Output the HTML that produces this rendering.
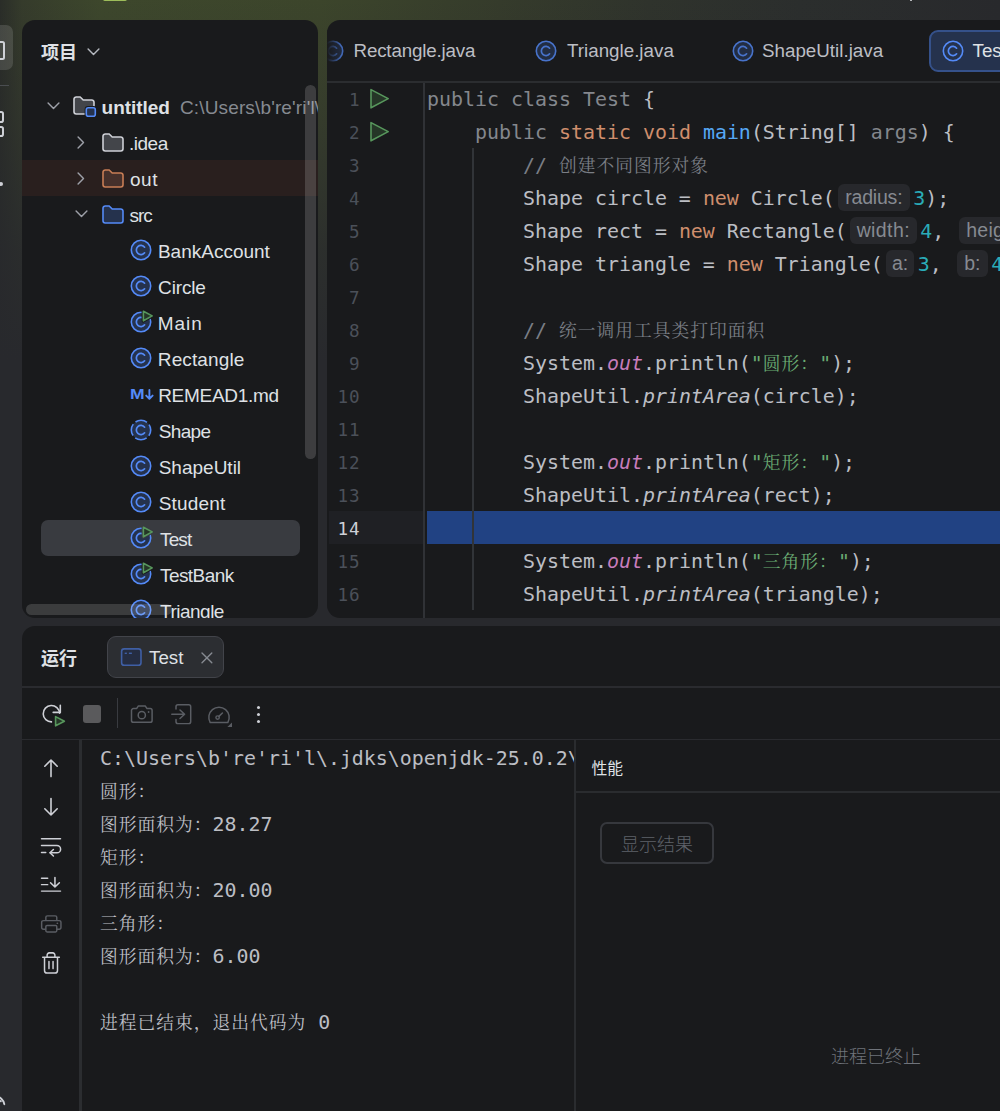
<!DOCTYPE html>
<html lang="zh-CN">
<head>
<meta charset="utf-8">
<title>untitled – Test.java</title>
<style>
*{box-sizing:border-box;margin:0;padding:0}
html,body{width:1000px;height:1111px;overflow:hidden;background:#28292d}
body{position:relative;font-family:"Liberation Sans","Noto Sans CJK SC",sans-serif;color:#dfe1e5}
.abs{position:absolute}
#bg{left:0;top:0;width:1000px;height:1111px;background:
 linear-gradient(180deg, rgba(40,41,45,0) 0px, rgba(40,41,45,.35) 120px, rgba(40,41,45,.8) 250px, rgba(40,41,45,1) 360px),
 linear-gradient(90deg, #2a2d28 0px, #353b2b 22px, #3d472c 100px, #3c452b 320px, #353b2b 500px, #2f332c 650px, #2b2e2d 800px, #28292c 1000px)}
#strip{left:0;top:0;width:22px;height:1111px;overflow:hidden}
.panel{position:absolute;background:#191a1c;overflow:hidden}
#proj{left:22px;top:20px;width:296px;height:598px;border-radius:13px}
#edit{left:327px;top:20px;width:700px;height:598px;border-radius:13px}
#run{left:22px;top:626px;width:1000px;height:500px;border-radius:13px}
.row{position:absolute;left:0;width:296px;height:36px;font-size:19px;line-height:36px;white-space:nowrap;color:#dfe1e5}
.row .t{position:absolute;top:2px}
.cl{position:absolute;left:100px;height:33px;line-height:33px;font-size:19.93px;white-space:pre;color:#bcbec4;font-family:"DejaVu Sans Mono","Liberation Mono","Noto Serif CJK SC",monospace}
.ln{position:absolute;left:0;width:33.2px;text-align:right;height:33px;line-height:33px;font-size:17.6px;letter-spacing:.7px;color:#4b5059;font-family:"DejaVu Sans Mono","Liberation Mono",monospace}
.g{color:#84878d}.k{color:#cf8e6d}.f{color:#56a8f5}.c{color:#7a7e85}.n{color:#2aacb8}.s{color:#6aab73}.p{color:#c77dbb;font-style:italic}.i{font-style:italic}
.cj{font-family:"Noto Serif CJK SC",serif;font-size:17.75px;letter-spacing:1px;line-height:1px}
.hint{display:inline-block;vertical-align:top;margin:2px 3.5px 0 3px;height:27px;line-height:27px;text-align:center;border-radius:6px;background:#27282c;color:#868a91;font-family:"Liberation Sans",sans-serif;font-size:19.5px;letter-spacing:-0.2px;font-style:normal;overflow:hidden}
.tabt{font-size:18.8px;line-height:36px;white-space:nowrap}
.con{color:#bcbec4}

</style>
</head>
<body>
<div id="bg" class="abs"></div>
<div class="abs" style="left:103px;top:-3px;width:24px;height:4.4px;border-radius:2px;background:#9dbd5a"></div>
<div class="abs" style="left:909.6px;top:-1.2px;width:2.2px;height:2.4px;border-radius:1px;background:#e6e7ea"></div>
<div id="strip" class="abs">
<div class="abs" style="left:-20px;top:25px;width:33px;height:45px;border-radius:7px;background:rgba(255,255,255,.13)"></div>
<div class="abs" style="left:-16px;top:41px;width:21px;height:18.5px;border:2px solid #ced0d6;border-radius:2.5px"></div>
<div class="abs" style="left:0;top:85px;width:9px;height:1.3px;background:#4a4d50"></div>
<div class="abs" style="left:-8px;top:111px;width:11.8px;height:11.5px;border:2px solid #ced0d6;border-radius:2.8px"></div>
<div class="abs" style="left:-8px;top:125.5px;width:11.8px;height:11.5px;border:2px solid #ced0d6;border-radius:2.8px"></div>
<div class="abs" style="left:-1px;top:182px;width:3.6px;height:3.6px;border-radius:2px;background:#ced0d6"></div>
<svg class="abs" style="left:0;top:1090px" width="10" height="21" viewBox="0 0 10 21"><path d="M-4.5 6.3A9.4 9.4 0 0 1 4.3 14.2" fill="none" stroke="#ced0d6" stroke-width="1.9" stroke-linecap="round"/><path d="M-2 10.6A3 3 0 0 1 0.9 11.4" fill="none" stroke="#ced0d6" stroke-width="1.6" stroke-linecap="round"/></svg>
</div>
<div id="proj" class="panel">
<div class="abs" style="left:19px;top:18.5px;font-size:18px;line-height:28px;font-weight:bold;color:#dfe1e5;white-space:nowrap">项目</div>
<svg class="abs" style="left:64.5px;top:27.8px" width="13" height="8" viewBox="0 0 13 8"><path d="M1.1 1.1L6.5 6.5L11.9 1.1" fill="none" stroke="#b4b8bf" stroke-width="1.45" stroke-linecap="round" stroke-linejoin="round"/></svg>
<div class="abs" style="left:0;top:140px;width:296px;height:36px;background:#291f1e"></div>
<div class="abs" style="left:19px;top:500px;width:259px;height:36px;border-radius:7px;background:#393b40"></div>
<svg class="abs" style="left:24.6px;top:82.2px" width="13" height="8" viewBox="0 0 13 8"><path d="M1.1 1.1L6.5 6.5L11.9 1.1" fill="none" stroke="#9da0a8" stroke-width="1.45" stroke-linecap="round" stroke-linejoin="round"/></svg>
<svg class="abs" style="left:51px;top:76px" width="25" height="23" viewBox="0 0 25 23"><path d="M1 3.2A2.2 2.2 0 0 1 3.2 1H7.2L10.2 4H18.8A2.2 2.2 0 0 1 21 6.2V15.8A2.2 2.2 0 0 1 18.8 18H3.2A2.2 2.2 0 0 1 1 15.8Z" fill="#43454a" stroke="#ced0d6" stroke-width="1.6" stroke-linejoin="round"/><rect x="11.6" y="10" width="12.4" height="12" rx="3.4" fill="#191a1c"/><rect x="13.3" y="11.7" width="9" height="8.6" rx="2" fill="#25324d" stroke="#548af7" stroke-width="1.6"/></svg>
<div class="row" style="top:68px"><span class="t" id="t_untitled" style="left:79px;font-weight:bold;letter-spacing:-0.03px;margin-left:0.6px">untitled</span><span class="t" id="t_path" style="left:158px;color:#868a91;letter-spacing:0.14px">C:\Users\b're'ri'l\IdeaProjects</span></div>
<svg class="abs" style="left:54.8px;top:115.5px" width="8" height="13" viewBox="0 0 8 13"><path d="M1.1 1.1L6.5 6.5L1.1 11.9" fill="none" stroke="#9da0a8" stroke-width="1.45" stroke-linecap="round" stroke-linejoin="round"/></svg>
<svg class="abs" style="left:80px;top:112.5px" width="22" height="19" viewBox="0 0 22 19"><path d="M1 3.2A2.2 2.2 0 0 1 3.2 1H7.2L10.2 4H18.8A2.2 2.2 0 0 1 21 6.2V15.8A2.2 2.2 0 0 1 18.8 18H3.2A2.2 2.2 0 0 1 1 15.8Z" fill="#43454a" stroke="#ced0d6" stroke-width="1.6" stroke-linejoin="round"/></svg>
<div class="row" style="top:104px"><span class="t" id="t_idea" style="left:107px;letter-spacing:-0.5px;margin-left:0.0px">.idea</span></div>
<svg class="abs" style="left:54.8px;top:151.5px" width="8" height="13" viewBox="0 0 8 13"><path d="M1.1 1.1L6.5 6.5L1.1 11.9" fill="none" stroke="#9da0a8" stroke-width="1.45" stroke-linecap="round" stroke-linejoin="round"/></svg>
<svg class="abs" style="left:80px;top:148.5px" width="22" height="19" viewBox="0 0 22 19"><path d="M1 3.2A2.2 2.2 0 0 1 3.2 1H7.2L10.2 4H18.8A2.2 2.2 0 0 1 21 6.2V15.8A2.2 2.2 0 0 1 18.8 18H3.2A2.2 2.2 0 0 1 1 15.8Z" fill="#45302b" stroke="#c77d55" stroke-width="1.6" stroke-linejoin="round"/></svg>
<div class="row" style="top:140px"><span class="t" id="t_out" style="left:107px;letter-spacing:0.5px;margin-left:1.0px">out</span></div>
<svg class="abs" style="left:52.599999999999994px;top:190.2px" width="13" height="8" viewBox="0 0 13 8"><path d="M1.1 1.1L6.5 6.5L11.9 1.1" fill="none" stroke="#9da0a8" stroke-width="1.45" stroke-linecap="round" stroke-linejoin="round"/></svg>
<svg class="abs" style="left:80px;top:184.5px" width="22" height="19" viewBox="0 0 22 19"><path d="M1 3.2A2.2 2.2 0 0 1 3.2 1H7.2L10.2 4H18.8A2.2 2.2 0 0 1 21 6.2V15.8A2.2 2.2 0 0 1 18.8 18H3.2A2.2 2.2 0 0 1 1 15.8Z" fill="#25324d" stroke="#548af7" stroke-width="1.6" stroke-linejoin="round"/></svg>
<div class="row" style="top:176px"><span class="t" id="t_src" style="left:107px;letter-spacing:-1.1px;margin-left:0.6px">src</span></div>
<svg class="abs" style="left:108px;top:218px;opacity:1;overflow:visible" width="24" height="24" viewBox="0 0 24 24"><circle cx="11" cy="12" r="9.7" fill="#25324d" stroke="#548af7" stroke-width="1.6"/><path d="M14.6 9.2A4.6 4.6 0 1 0 14.6 14.8" fill="none" stroke="#548af7" stroke-width="1.7" stroke-linecap="round"/></svg>
<div class="row" style="top:212px"><span class="t" id="t_BankAccount" style="left:136px;letter-spacing:-0.0px;margin-left:-0.1px">BankAccount</span></div>
<svg class="abs" style="left:108px;top:254px;opacity:1;overflow:visible" width="24" height="24" viewBox="0 0 24 24"><circle cx="11" cy="12" r="9.7" fill="#25324d" stroke="#548af7" stroke-width="1.6"/><path d="M14.6 9.2A4.6 4.6 0 1 0 14.6 14.8" fill="none" stroke="#548af7" stroke-width="1.7" stroke-linecap="round"/></svg>
<div class="row" style="top:248px"><span class="t" id="t_Circle" style="left:136px;letter-spacing:-0.16px;margin-left:0.1px">Circle</span></div>
<svg class="abs" style="left:108px;top:290px;opacity:1;overflow:visible" width="24" height="24" viewBox="0 0 24 24"><circle cx="11" cy="12" r="9.7" fill="#25324d" stroke="#548af7" stroke-width="1.6"/><path d="M14.6 9.2A4.6 4.6 0 1 0 14.6 14.8" fill="none" stroke="#548af7" stroke-width="1.7" stroke-linecap="round"/><path d="M13.4 1.2L22.2 5.9L13.4 10.8Z" fill="#253627" stroke="#191a1c" stroke-width="3.6" stroke-linejoin="round"/><path d="M13.4 1.2L22.2 5.9L13.4 10.8Z" fill="#253627" stroke="#57965c" stroke-width="1.6" stroke-linejoin="round"/></svg>
<div class="row" style="top:284px"><span class="t" id="t_Main" style="left:136px;letter-spacing:0.94px;margin-left:-0.2px">Main</span></div>
<svg class="abs" style="left:108px;top:326px;opacity:1;overflow:visible" width="24" height="24" viewBox="0 0 24 24"><circle cx="11" cy="12" r="9.7" fill="#25324d" stroke="#548af7" stroke-width="1.6"/><path d="M14.6 9.2A4.6 4.6 0 1 0 14.6 14.8" fill="none" stroke="#548af7" stroke-width="1.7" stroke-linecap="round"/></svg>
<div class="row" style="top:320px"><span class="t" id="t_Rectangle" style="left:136px;letter-spacing:0.12px;margin-left:-0.2px">Rectangle</span></div>
<div class="abs" style="left:107.6px;top:363px;font-size:14.6px;line-height:22px;font-weight:bold;color:#548af7;white-space:nowrap;transform:scaleX(1.2);transform-origin:0 0">M</div><svg class="abs" style="left:122.6px;top:368.8px" width="9" height="12" viewBox="0 0 9 12"><path d="M4.4 1V9.6M1.2 6.6L4.4 9.8L7.6 6.6" fill="none" stroke="#548af7" stroke-width="1.9" stroke-linecap="round" stroke-linejoin="round"/></svg>
<div class="row" style="top:356px"><span class="t" id="t_REMEAD1" style="left:136px;letter-spacing:-0.29px;margin-left:0.2px">REMEAD1.md</span></div>
<svg class="abs" style="left:108px;top:398px;opacity:1;overflow:visible" width="24" height="24" viewBox="0 0 24 24"><circle cx="11" cy="12" r="9.7" fill="#25324d" stroke="#548af7" stroke-width="1.6" stroke-dasharray="12.2 3.04" stroke-dashoffset="6.1"/><path d="M14.6 9.2A4.6 4.6 0 1 0 14.6 14.8" fill="none" stroke="#548af7" stroke-width="1.7" stroke-linecap="round"/></svg>
<div class="row" style="top:392px"><span class="t" id="t_Shape" style="left:136px;letter-spacing:-0.65px;margin-left:0.7px">Shape</span></div>
<svg class="abs" style="left:108px;top:434px;opacity:1;overflow:visible" width="24" height="24" viewBox="0 0 24 24"><circle cx="11" cy="12" r="9.7" fill="#25324d" stroke="#548af7" stroke-width="1.6"/><path d="M14.6 9.2A4.6 4.6 0 1 0 14.6 14.8" fill="none" stroke="#548af7" stroke-width="1.7" stroke-linecap="round"/></svg>
<div class="row" style="top:428px"><span class="t" id="t_ShapeUtil" style="left:136px;letter-spacing:0.0px;margin-left:0.7px">ShapeUtil</span></div>
<svg class="abs" style="left:108px;top:470px;opacity:1;overflow:visible" width="24" height="24" viewBox="0 0 24 24"><circle cx="11" cy="12" r="9.7" fill="#25324d" stroke="#548af7" stroke-width="1.6"/><path d="M14.6 9.2A4.6 4.6 0 1 0 14.6 14.8" fill="none" stroke="#548af7" stroke-width="1.7" stroke-linecap="round"/></svg>
<div class="row" style="top:464px"><span class="t" id="t_Student" style="left:136px;letter-spacing:0.2px;margin-left:0.7px">Student</span></div>
<svg class="abs" style="left:108px;top:506px;opacity:1;overflow:visible" width="24" height="24" viewBox="0 0 24 24"><circle cx="11" cy="12" r="9.7" fill="#25324d" stroke="#548af7" stroke-width="1.6"/><path d="M14.6 9.2A4.6 4.6 0 1 0 14.6 14.8" fill="none" stroke="#548af7" stroke-width="1.7" stroke-linecap="round"/><path d="M13.4 1.2L22.2 5.9L13.4 10.8Z" fill="#253627" stroke="#393b40" stroke-width="3.6" stroke-linejoin="round"/><path d="M13.4 1.2L22.2 5.9L13.4 10.8Z" fill="#253627" stroke="#57965c" stroke-width="1.6" stroke-linejoin="round"/></svg>
<div class="row" style="top:500px"><span class="t" id="t_Test" style="left:136px;letter-spacing:-0.87px;margin-left:2.0px">Test</span></div>
<svg class="abs" style="left:108px;top:542px;opacity:1;overflow:visible" width="24" height="24" viewBox="0 0 24 24"><circle cx="11" cy="12" r="9.7" fill="#25324d" stroke="#548af7" stroke-width="1.6"/><path d="M14.6 9.2A4.6 4.6 0 1 0 14.6 14.8" fill="none" stroke="#548af7" stroke-width="1.7" stroke-linecap="round"/><path d="M13.4 1.2L22.2 5.9L13.4 10.8Z" fill="#253627" stroke="#191a1c" stroke-width="3.6" stroke-linejoin="round"/><path d="M13.4 1.2L22.2 5.9L13.4 10.8Z" fill="#253627" stroke="#57965c" stroke-width="1.6" stroke-linejoin="round"/></svg>
<div class="row" style="top:536px"><span class="t" id="t_TestBank" style="left:136px;letter-spacing:-0.57px;margin-left:2.0px">TestBank</span></div>
<svg class="abs" style="left:108px;top:578px;opacity:1;overflow:visible" width="24" height="24" viewBox="0 0 24 24"><circle cx="11" cy="12" r="9.7" fill="#25324d" stroke="#548af7" stroke-width="1.6"/><path d="M14.6 9.2A4.6 4.6 0 1 0 14.6 14.8" fill="none" stroke="#548af7" stroke-width="1.7" stroke-linecap="round"/></svg>
<div class="row" style="top:572px"><span class="t" id="t_Triangle" style="left:136px;letter-spacing:-0.5px;margin-left:2px">Triangle</span></div>
<div class="abs" style="left:283px;top:65px;width:10.8px;height:374px;border-radius:5.4px;background:rgba(255,255,255,.155)"></div>
<div class="abs" style="left:4px;top:584px;width:146px;height:10.5px;border-radius:5.5px;background:rgba(255,255,255,.15)"></div>
</div>
<div id="edit" class="panel">
<div class="abs" style="left:0;top:0;width:40px;height:60px;overflow:hidden"><svg class="abs" style="left:-4.699999999999989px;top:19px;opacity:0.7;overflow:visible" width="24" height="24" viewBox="0 0 24 24"><circle cx="11" cy="12" r="9.7" fill="#25324d" stroke="#548af7" stroke-width="1.6"/><path d="M14.6 9.2A4.6 4.6 0 1 0 14.6 14.8" fill="none" stroke="#548af7" stroke-width="1.7" stroke-linecap="round"/></svg><div class="abs" style="left:0;top:10px;width:14px;height:44px;background:linear-gradient(90deg,#191a1c 0%,rgba(25,26,28,0) 100%)"></div></div>
<div class="abs tabt" id="tab1" style="left:26.5px;top:13px;color:#bcbec4;letter-spacing:-0.18px">Rectangle.java</div>
<svg class="abs" style="left:208px;top:19px;opacity:0.8;overflow:visible" width="24" height="24" viewBox="0 0 24 24"><circle cx="11" cy="12" r="9.7" fill="#25324d" stroke="#548af7" stroke-width="1.6"/><path d="M14.6 9.2A4.6 4.6 0 1 0 14.6 14.8" fill="none" stroke="#548af7" stroke-width="1.7" stroke-linecap="round"/></svg><div class="abs tabt" id="tab2" style="left:240px;top:13px;color:#bcbec4">Triangle.java</div>
<svg class="abs" style="left:405px;top:19px;opacity:0.8;overflow:visible" width="24" height="24" viewBox="0 0 24 24"><circle cx="11" cy="12" r="9.7" fill="#25324d" stroke="#548af7" stroke-width="1.6"/><path d="M14.6 9.2A4.6 4.6 0 1 0 14.6 14.8" fill="none" stroke="#548af7" stroke-width="1.7" stroke-linecap="round"/></svg><div class="abs tabt" id="tab3" style="left:435px;top:13px;color:#bcbec4">ShapeUtil.java</div>
<div class="abs" style="left:601.5px;top:9.5px;width:120px;height:42px;border-radius:9px;background:#25324d;border:2px solid #35518a"></div>
<svg class="abs" style="left:614.7px;top:19px;opacity:1;overflow:visible" width="24" height="24" viewBox="0 0 24 24"><circle cx="11" cy="12" r="9.7" fill="#25324d" stroke="#548af7" stroke-width="1.6"/><path d="M14.6 9.2A4.6 4.6 0 1 0 14.6 14.8" fill="none" stroke="#548af7" stroke-width="1.7" stroke-linecap="round"/></svg>
<div class="abs tabt" id="tab4" style="left:645.5px;top:13px;color:#dfe1e5">Test.java</div>
<div class="abs" style="left:0;top:61px;width:700px;height:2px;background:#2b2d30"></div>
<div class="abs" style="left:1.5px;top:491px;width:95px;height:33px;background:#1f2024"></div>
<div class="abs" style="left:100px;top:491px;width:600px;height:33px;background:#214283"></div>
<div class="abs" style="left:96.2px;top:63px;width:2px;height:540px;background:#303236"></div>
<div class="abs" style="left:145.3px;top:128px;width:1.3px;height:462px;background:#313438"></div>
<div class="ln" style="top:64px;color:#4b5059">1</div>
<div class="ln" style="top:97px;color:#4b5059">2</div>
<div class="ln" style="top:130px;color:#4b5059">3</div>
<div class="ln" style="top:163px;color:#4b5059">4</div>
<div class="ln" style="top:196px;color:#4b5059">5</div>
<div class="ln" style="top:229px;color:#4b5059">6</div>
<div class="ln" style="top:262px;color:#4b5059">7</div>
<div class="ln" style="top:295px;color:#4b5059">8</div>
<div class="ln" style="top:328px;color:#4b5059">9</div>
<div class="ln" style="top:361px;color:#4b5059">10</div>
<div class="ln" style="top:394px;color:#4b5059">11</div>
<div class="ln" style="top:427px;color:#4b5059">12</div>
<div class="ln" style="top:460px;color:#4b5059">13</div>
<div class="ln" style="top:493px;color:#ced0d6">14</div>
<div class="ln" style="top:526px;color:#4b5059">15</div>
<div class="ln" style="top:559px;color:#4b5059">16</div>
<svg class="abs" style="left:42px;top:67px" width="22" height="24" viewBox="0 0 22 24"><path d="M2 2.6L19.2 11.6L2 20.8Z" fill="#253627" stroke="#57965c" stroke-width="1.6" stroke-linejoin="round"/></svg>
<svg class="abs" style="left:42px;top:100px" width="22" height="24" viewBox="0 0 22 24"><path d="M2 2.6L19.2 11.6L2 20.8Z" fill="#253627" stroke="#57965c" stroke-width="1.6" stroke-linejoin="round"/></svg>
<div class="cl" id="L1" style="top:63px"><span class="g">public class Test</span> {</div>
<div class="cl" id="L2" style="top:96px">    <span class="g">public</span> <span class="k">static void</span> <span class="f">main</span>(String[] <span class="g">args</span>) {</div>
<div class="cl" id="L3" style="top:129px">        <span class="c">// <span class="cj">创建不同图形对象</span></span></div>
<div class="cl" id="L4" style="top:162px">        Shape circle = <span class="k">new</span> Circle(<span class="hint" style="width:72px;letter-spacing:-0.2px">radius:</span><span class="n">3</span>);</div>
<div class="cl" id="L5" style="top:195px">        Shape rect = <span class="k">new</span> Rectangle(<span class="hint" style="width:67px;letter-spacing:0.4px">width:</span><span class="n">4</span>, <span class="hint" style="width:74px;letter-spacing:0.2px">height:</span><span class="n">5</span>);</div>
<div class="cl" id="L6" style="top:228px">        Shape triangle = <span class="k">new</span> Triangle(<span class="hint" style="width:28.5px;letter-spacing:-0.2px">a:</span><span class="n">3</span>, <span class="hint" style="width:31px;letter-spacing:-0.2px">b:</span><span class="n">4</span>, <span class="hint" style="width:29px;letter-spacing:-0.2px">c:</span><span class="n">5</span>);</div>
<div class="cl" id="L8" style="top:294px">        <span class="c">// <span class="cj">统一调用工具类打印面积</span></span></div>
<div class="cl" id="L9" style="top:327px">        System.<span class="p">out</span>.println(<span class="s">"<span class="cj">圆形：</span>"</span>);</div>
<div class="cl" id="L10" style="top:360px">        ShapeUtil.<span class="i">printArea</span>(circle);</div>
<div class="cl" id="L12" style="top:426px">        System.<span class="p">out</span>.println(<span class="s">"<span class="cj">矩形：</span>"</span>);</div>
<div class="cl" id="L13" style="top:459px">        ShapeUtil.<span class="i">printArea</span>(rect);</div>
<div class="cl" id="L15" style="top:525px">        System.<span class="p">out</span>.println(<span class="s">"<span class="cj">三角形：</span>"</span>);</div>
<div class="cl" id="L16" style="top:558px">        ShapeUtil.<span class="i">printArea</span>(triangle);</div>
</div>
<div id="run" class="panel">
<div class="abs" style="left:19px;top:19px;font-size:18px;line-height:28px;font-weight:bold;white-space:nowrap;color:#dfe1e5">运行</div>
<div class="abs" style="left:84.5px;top:9.5px;width:117px;height:42px;border-radius:9px;background:#2c2e32;border:1.6px solid #42444a"></div>
<svg class="abs" style="left:98px;top:21px" width="23" height="20" viewBox="0 0 23 20"><rect x="1.6" y="1.9" width="19.4" height="16.4" rx="2.6" fill="#252d42" stroke="#3f5fa5" stroke-width="1.6"/><rect x="4.7" y="5.6" width="2.2" height="1.4" fill="#3f5fa5"/><rect x="8.9" y="5.6" width="3" height="1.4" fill="#3f5fa5"/></svg>
<div class="abs tabt" id="runtab" style="left:127px;top:13.5px;color:#dfe1e5">Test</div>
<svg class="abs" style="left:179.2px;top:26px" width="12" height="12" viewBox="0 0 12 12"><path d="M1 1L10.8 10.8M10.8 1L1 10.8" stroke="#868a91" stroke-width="1.4" stroke-linecap="round"/></svg>
<div class="abs" style="left:0;top:60.299999999999955px;width:1000px;height:1.4px;background:#2a2b2f"></div>
<div class="abs" style="left:0;top:112.89999999999998px;width:1000px;height:1.3px;background:#2a2b2f"></div>
<svg class="abs" style="left:20px;top:76px" width="26" height="26" viewBox="0 0 26 26"><path d="M17.6 11.2A8.2 8.2 0 1 0 9.6 19.9" fill="none" stroke="#ced0d6" stroke-width="1.6" stroke-linecap="round"/><path d="M18.3 3.2V10.4H11.2" fill="none" stroke="#ced0d6" stroke-width="1.6" stroke-linecap="round" stroke-linejoin="round"/><path d="M12.4 14.2L22.6 19.2L12.4 24.2Z" fill="#191a1c" stroke="#191a1c" stroke-width="4" stroke-linejoin="round"/><path d="M13.6 14.6L22.4 19.2L13.6 23.8Z" fill="#253627" stroke="#57965c" stroke-width="1.6" stroke-linejoin="round"/></svg>
<div class="abs" style="left:61.2px;top:79.20000000000005px;width:18px;height:18px;border-radius:3px;background:#5a5a5c"></div>
<div class="abs" style="left:94.5px;top:72px;width:1.5px;height:30px;background:#393b40"></div>
<svg class="abs" style="left:107.5px;top:77px" width="24" height="22" viewBox="0 0 24 22"><path d="M3.4 5.6H6.6L8.4 2.9H15.2L17 5.6H20.2A1.9 1.9 0 0 1 22.1 7.5V17.4A1.9 1.9 0 0 1 20.2 19.3H3.4A1.9 1.9 0 0 1 1.5 17.4V7.5A1.9 1.9 0 0 1 3.4 5.6Z" fill="none" stroke="#5a5d63" stroke-width="1.5" stroke-linejoin="round"/><circle cx="11.8" cy="12.2" r="3.6" fill="none" stroke="#5a5d63" stroke-width="1.5"/><circle cx="18.6" cy="9" r="0.9" fill="#5a5d63"/></svg>
<svg class="abs" style="left:148px;top:76.5px" width="23" height="23" viewBox="0 0 23 24" preserveAspectRatio="none"><path d="M6 6.2V3.8A1.9 1.9 0 0 1 7.9 1.9H18.8A1.9 1.9 0 0 1 20.7 3.8V19.6A1.9 1.9 0 0 1 18.8 21.5H7.9A1.9 1.9 0 0 1 6 19.6V17.2" fill="none" stroke="#5a5d63" stroke-width="1.5" stroke-linecap="round"/><path d="M1.8 11.7H14.4M10 7.2L14.6 11.7L10 16.2" fill="none" stroke="#5a5d63" stroke-width="1.5" stroke-linecap="round" stroke-linejoin="round"/></svg>
<svg class="abs" style="left:183.7px;top:78px" width="28" height="24" viewBox="0 0 28 24"><path d="M4.2 18.6A10.2 10.2 0 1 1 21.8 18.6Z" fill="none" stroke="#5a5d63" stroke-width="1.5" stroke-linejoin="round"/><circle cx="11.6" cy="13.6" r="1.7" fill="none" stroke="#5a5d63" stroke-width="1.4"/><path d="M12.9 12.4L16.4 9" stroke="#5a5d63" stroke-width="1.5" stroke-linecap="round"/><path d="M26 18.4V23H21.4Z" fill="#5a5d63"/></svg>
<div class="abs" style="left:234.5px;top:80.29999999999995px;width:3.2px;height:3.2px;border-radius:2px;background:#ced0d6"></div>
<div class="abs" style="left:234.5px;top:87.0px;width:3.2px;height:3.2px;border-radius:2px;background:#ced0d6"></div>
<div class="abs" style="left:234.5px;top:93.70000000000005px;width:3.2px;height:3.2px;border-radius:2px;background:#ced0d6"></div>
<svg class="abs" style="left:19px;top:131px" width="20" height="22" viewBox="0 0 20 22"><path d="M10 19.6V3M3.8 9.2L10 3L16.2 9.2" fill="none" stroke="#ced0d6" stroke-width="1.6" stroke-linecap="round" stroke-linejoin="round"/></svg>
<svg class="abs" style="left:19px;top:170px" width="20" height="22" viewBox="0 0 20 22"><path d="M10 2.6V19M3.8 12.8L10 19L16.2 12.8" fill="none" stroke="#ced0d6" stroke-width="1.6" stroke-linecap="round" stroke-linejoin="round"/></svg>
<svg class="abs" style="left:17.5px;top:210px" width="23" height="20.5" viewBox="0 0 24 22" preserveAspectRatio="none"><path d="M1.6 3H21.4" fill="none" stroke="#ced0d6" stroke-width="1.6" stroke-linecap="round"/><path d="M1.6 10.2H17.6A3.9 3.9 0 0 1 17.6 18H10.6" fill="none" stroke="#ced0d6" stroke-width="1.6" stroke-linecap="round"/><path d="M14 14.4L10.4 18L14 21.4" fill="none" stroke="#ced0d6" stroke-width="1.6" stroke-linecap="round" stroke-linejoin="round"/><path d="M1.6 17.6H6" stroke="#ced0d6" stroke-width="1.6" stroke-linecap="round"/></svg>
<svg class="abs" style="left:17.5px;top:250.29999999999995px" width="23" height="18" viewBox="0 0 24 20" preserveAspectRatio="none"><path d="M1.6 2.6H8M1.6 9.6H8M1.6 16.8H21.4" fill="none" stroke="#ced0d6" stroke-width="1.6" stroke-linecap="round"/><path d="M15.6 1.6V12M11 7.6L15.6 12.2L20.2 7.6" fill="none" stroke="#ced0d6" stroke-width="1.6" stroke-linecap="round" stroke-linejoin="round"/></svg>
<svg class="abs" style="left:17.5px;top:287.5px" width="23.4" height="20.4" viewBox="0 0 24 22" preserveAspectRatio="none"><path d="M6 7V3.6A1.6 1.6 0 0 1 7.6 2H15.6A1.6 1.6 0 0 1 17.2 3.6V7" fill="none" stroke="#5a5d63" stroke-width="1.5"/><path d="M6 16.4H3.6A1.9 1.9 0 0 1 1.7 14.5V9A1.9 1.9 0 0 1 3.6 7.1H19.6A1.9 1.9 0 0 1 21.5 9V14.5A1.9 1.9 0 0 1 19.6 16.4H17.2" fill="none" stroke="#5a5d63" stroke-width="1.5"/><rect x="6" y="12.4" width="11.2" height="7" rx="1.2" fill="none" stroke="#5a5d63" stroke-width="1.5"/><circle cx="17.8" cy="10" r="0.9" fill="#5a5d63"/></svg>
<svg class="abs" style="left:18.799999999999997px;top:325px" width="20.4" height="24" viewBox="0 0 22 24" preserveAspectRatio="none"><path d="M1.8 6.2H19.8" stroke="#ced0d6" stroke-width="1.6" stroke-linecap="round"/><path d="M6.6 6V4.2A2.3 2.3 0 0 1 8.9 1.9H12.7A2.3 2.3 0 0 1 15 4.2V6" fill="none" stroke="#ced0d6" stroke-width="1.6"/><path d="M3.8 6.4V19.4A2.6 2.6 0 0 0 6.4 22H15.2A2.6 2.6 0 0 0 17.8 19.4V6.4" fill="none" stroke="#ced0d6" stroke-width="1.6"/><path d="M8.6 10.6V17.6M13 10.6V17.6" stroke="#ced0d6" stroke-width="1.6" stroke-linecap="round"/></svg>
<div class="abs" style="left:57.3px;top:114px;width:2.6px;height:400px;background:#2b2d30"></div>
<div class="abs" style="left:60px;top:114px;width:492px;height:380px;overflow:hidden">
<div class="cl con" id="C0" style="left:18px;top:2px">C:\Users\b're'ri'l\.jdks\openjdk-25.0.2\bin\java.exe</div>
<div class="cl con" id="C1" style="left:18px;top:35px"><span class="cj">圆形：</span></div>
<div class="cl con" id="C2" style="left:18px;top:68px"><span class="cj">图形面积为：</span>28.27</div>
<div class="cl con" id="C3" style="left:18px;top:101px"><span class="cj">矩形：</span></div>
<div class="cl con" id="C4" style="left:18px;top:134px"><span class="cj">图形面积为：</span>20.00</div>
<div class="cl con" id="C5" style="left:18px;top:167px"><span class="cj">三角形：</span></div>
<div class="cl con" id="C6" style="left:18px;top:200px"><span class="cj">图形面积为：</span>6.00</div>
<div class="cl con" id="C7" style="left:18px;top:233px"></div>
<div class="cl con" id="C8" style="left:18px;top:266px"><span class="cj">进程已结束，退出代码为</span> 0</div>
</div>
<div class="abs" style="left:552.1px;top:114px;width:2px;height:400px;background:#2a2c2f"></div>
<div class="abs" style="left:554px;top:165px;width:500px;height:2px;background:#2a2c2f"></div>
<div class="abs" style="left:569.5px;top:130.5px;font-size:15.8px;line-height:24px;white-space:nowrap;color:#dfe1e5">性能</div>
<div class="abs" style="left:578px;top:195.5px;width:114px;height:42px;border-radius:7px;border:2px solid #36383d;font-size:18px;line-height:42px;text-align:center;color:#5f636a;font-weight:300;white-space:nowrap">显示结果</div>
<div class="abs" style="left:809px;top:417px;font-size:18px;line-height:28px;white-space:nowrap;color:#6f737a;font-weight:300">进程已终止</div>
</div>
</body>
</html>
